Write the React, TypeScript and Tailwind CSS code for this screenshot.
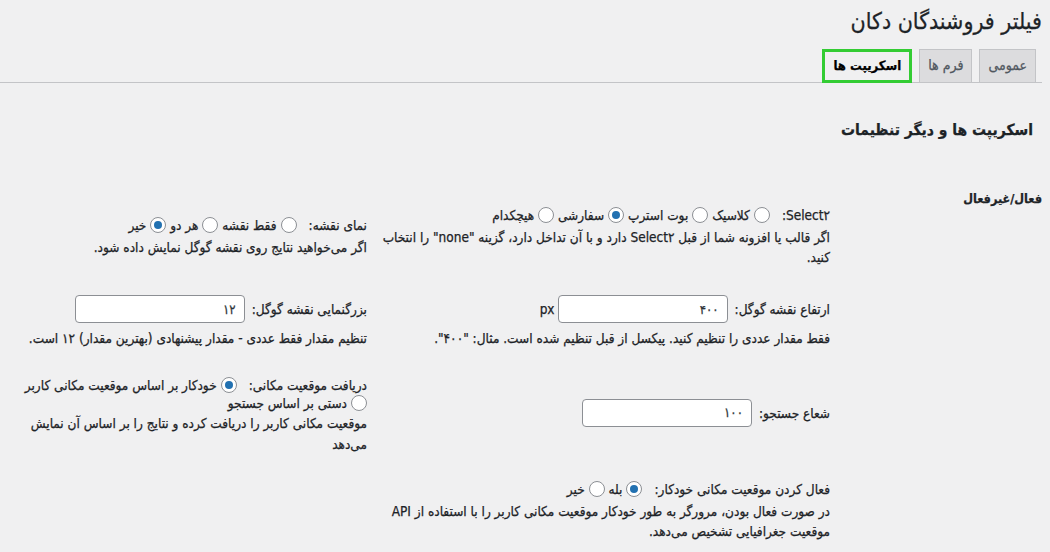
const font = "font-['DejaVu_Sans_Condensed','DejaVu_Sans',sans-serif]";

function Radio({ checked = false }: { checked?: boolean }) {
  return (
    <span className="inline-flex items-center justify-center align-middle w-4 h-4 rounded-full border border-[#8c8f94] bg-white ml-1 -mt-[3px]">
      {checked && <span className="w-2 h-2 rounded-full bg-[#2271b1]" />}
    </span>
  );
}

function Field({ value, width = "w-[170px]" }: { value: string; width?: string }) {
  return (
    <input
      readOnly
      dir="rtl"
      defaultValue={value}
      className={`${width} h-[28px] rounded border border-[#8c8f94] bg-white px-2 text-[13px] text-[#2c3338] outline-none`}
    />
  );
}

export default function App() {
  return (
    <div
      dir="rtl"
      className={`min-h-screen bg-[#f0f0f1] pr-2 pt-[6px] text-[13.5px] leading-5 text-[#1d2327] [-webkit-text-stroke:0.25px] ${font}`}
    >
      <h1 className="text-[23px] leading-[30px]">فیلتر فروشندگان دکان</h1>

      {/* tabs */}
      <nav className="mt-[13px] flex items-end gap-[7px] border-b border-[#c3c4c7] pr-[6px]">
        <span className="h-[33px] px-[8px] leading-[31px] border border-b-0 border-[#c3c4c7] bg-[#dcdcde] text-[14px] text-[#50575e]">
          عمومی
        </span>
        <span className="h-[33px] px-[8px] leading-[31px] border border-b-0 border-[#c3c4c7] bg-[#dcdcde] text-[14px] text-[#50575e]">
          فرم ها
        </span>
        <span className="-mb-px h-[34px] px-[8px] leading-[28px] border-[3px] border-[#33cc33] bg-[#f0f0f1] text-[13px] font-bold text-black">
          اسکریپت ها
        </span>
      </nav>

      <h2 className="mt-[35px] pr-[9px] text-[15.5px] leading-6 font-bold">اسکریپت ها و دیگر تنظیمات</h2>

      <div className="mt-[47px] flex">
        <div className="w-[212px] shrink-0 text-[12.5px] font-bold leading-5">فعال/غیرفعال</div>

        <div className="w-[830px] pt-[14px] grid grid-cols-[450px_1fr] gap-x-[13px] gap-y-[28px] items-center">
          {/* select2 */}
          <div>
            <div className="leading-6">
              <span className="ml-3">Select۲:</span>
              <Radio />کلاسیک <Radio />بوت استرپ <Radio checked />سفارشی <Radio />هیچکدام
            </div>
            <p className="leading-5">
              اگر قالب یا افزونه شما از قبل Select۲ دارد و با آن تداخل دارد، گزینه "none" را انتخاب کنید.
            </p>
          </div>

          {/* map view */}
          <div>
            <div className="leading-6">
              <span className="ml-3">نمای نقشه:</span>
              <Radio />فقط نقشه <Radio />هر دو <Radio checked />خیر
            </div>
            <p className="leading-5">اگر می‌خواهید نتایج روی نقشه گوگل نمایش داده شود.</p>
          </div>

          {/* map height */}
          <div>
            <div className="flex items-center gap-[7px]">
              <span>ارتفاع نقشه گوگل:</span>
              <Field value="۴۰۰" />
              <span className="-mr-[4px]">px</span>
            </div>
            <p className="mt-[5px] leading-5">
              فقط مقدار عددی را تنظیم کنید. پیکسل از قبل تنظیم شده است. مثال: "۴۰۰".
            </p>
          </div>

          {/* zoom */}
          <div>
            <div className="flex items-center gap-[7px]">
              <span>بزرگنمایی نقشه گوگل:</span>
              <Field value="۱۲" />
            </div>
            <p className="mt-[5px] leading-5">
              تنظیم مقدار فقط عددی - مقدار پیشنهادی (بهترین مقدار) ۱۲ است.
            </p>
          </div>

          {/* radius */}
          <div className="mb-[6px] flex items-center gap-[7px]">
            <span>شعاع جستجو:</span>
            <Field value="۱۰۰" />
          </div>

          {/* location */}
          <div>
            <div className="leading-[18px]">
              <span className="ml-3">دریافت موقعیت مکانی:</span>
              <Radio checked />خودکار بر اساس موقعیت مکانی کاربر <br />
              <Radio />دستی بر اساس جستجو
            </div>
            <p className="mt-[1px] leading-[21px]">
              موقعیت مکانی کاربر را دریافت کرده و نتایج را بر اساس آن نمایش می‌دهد
            </p>
          </div>

          {/* auto location */}
          <div className="-mt-[6px]">
            <div className="leading-6">
              <span className="ml-3">فعال کردن موقعیت مکانی خودکار:</span>
              <Radio checked />بله <Radio />خیر
            </div>
            <p className="leading-5">
              در صورت فعال بودن، مرورگر به طور خودکار موقعیت مکانی کاربر را با استفاده از API موقعیت جغرافیایی تشخیص می‌دهد.
            </p>
          </div>
        </div>
      </div>
    </div>
  );
}
